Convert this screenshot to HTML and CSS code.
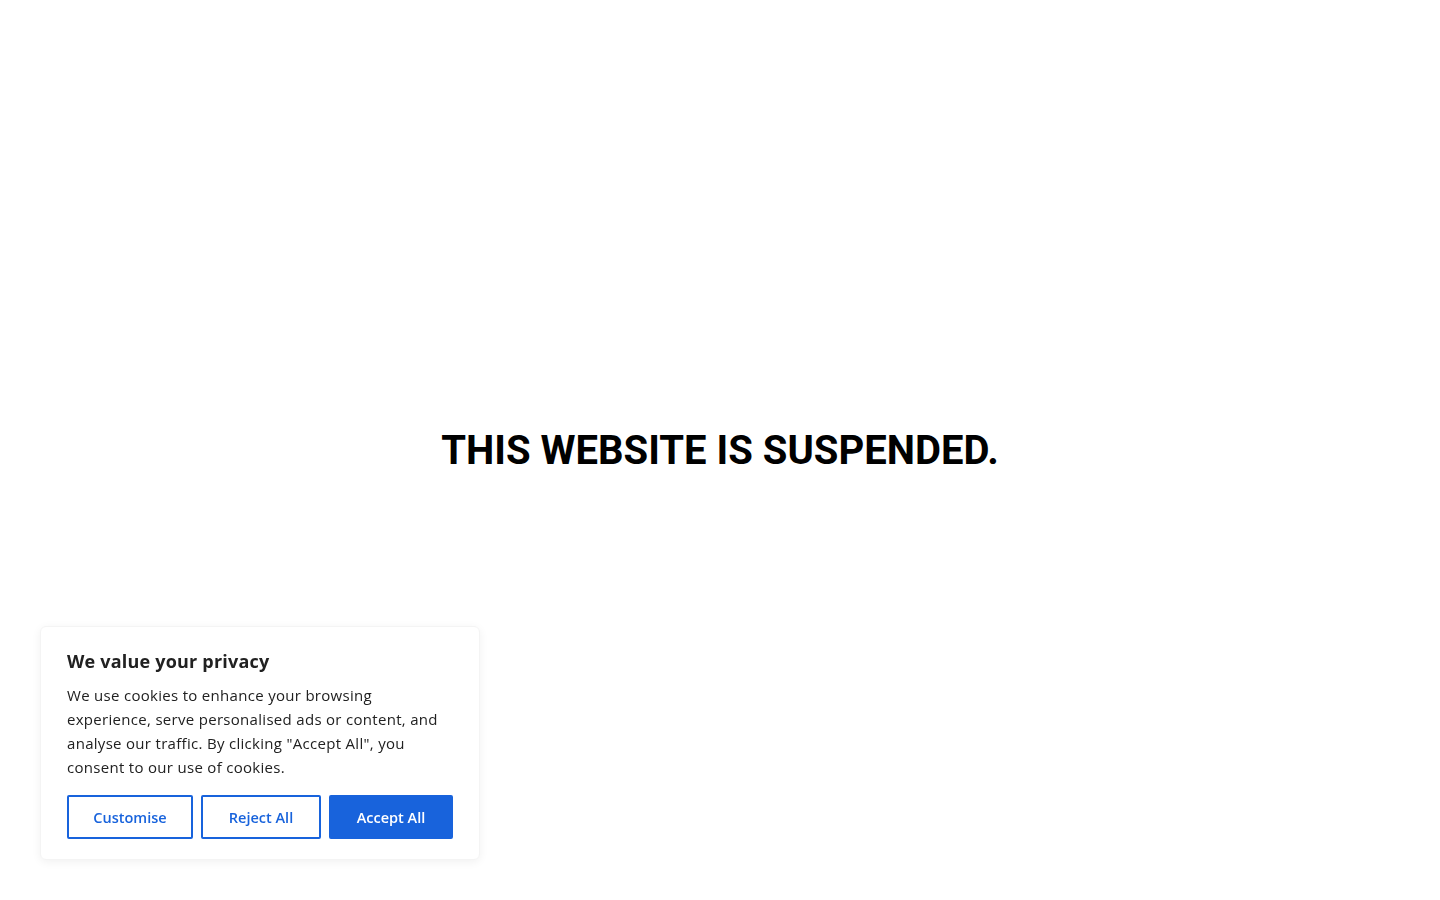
FILE: index.html
```html
<!DOCTYPE html>
<html lang="en">
<head>
    <meta charset="UTF-8">
    <meta name="viewport" content="width=device-width, initial-scale=1.0">
    <title>Website suspended</title>
    <link rel="stylesheet" href="styles.css">
</head>
<body>
    <div class="page">
        <h1>THIS WEBSITE IS SUSPENDED.</h1>
    </div>

    <div class="consent">
        <p class="consent-title">We value your privacy</p>
        <p class="consent-text">We use cookies to enhance your browsing experience, serve personalised ads or content, and analyse our traffic. By clicking "Accept All", you consent to our use of cookies.</p>
        <div class="consent-buttons">
            <button class="btn btn-outline btn-customise">Customise</button>
            <button class="btn btn-outline btn-reject">Reject All</button>
            <button class="btn btn-solid btn-accept">Accept All</button>
        </div>
    </div>
</body>
</html>
```

FILE: styles.css
```css
body {
    margin: 0;
    background-color: #fff;
    font-family: Roboto, "Liberation Sans", sans-serif;
}

.page {
    height: 100vh;
    display: flex;
    align-items: center;
    justify-content: center;
}

h1 {
    margin: 0;
    font-size: 40px;
    font-weight: 700;
    color: #000;
}

.consent {
    position: fixed;
    left: 40px;
    bottom: 40px;
    width: 440px;
    box-sizing: border-box;
    padding: 22px 26px 20px;
    background-color: #fff;
    border: 1px solid #f4f4f4;
    border-radius: 6px;
    box-shadow: 0 2px 10px rgba(0, 0, 0, 0.06);
    font-family: "Open Sans", Lato, sans-serif;
    color: #212121;
}

.consent-title {
    margin: 0 0 10px;
    font-size: 18px;
    font-weight: 700;
    line-height: 24px;
    letter-spacing: 0.2px;
}

.consent-text {
    margin: 0 0 16px;
    font-size: 15px;
    font-weight: 500;
    line-height: 24px;
    letter-spacing: 0.3px;
}

.consent-buttons {
    display: flex;
    gap: 8px;
}

.btn {
    height: 44px;
    box-sizing: border-box;
    border: 2px solid #1863dc;
    border-radius: 2px;
    font-family: "Open Sans", Lato, sans-serif;
    font-size: 14.5px;
    font-weight: 600;
    cursor: pointer;
}

.btn-outline {
    background-color: #fff;
    color: #1863dc;
}

.btn-solid {
    background-color: #1863dc;
    color: #fff;
}

.btn-customise { width: 126px; }
.btn-reject { width: 120px; }
.btn-accept { width: 124px; }
```
